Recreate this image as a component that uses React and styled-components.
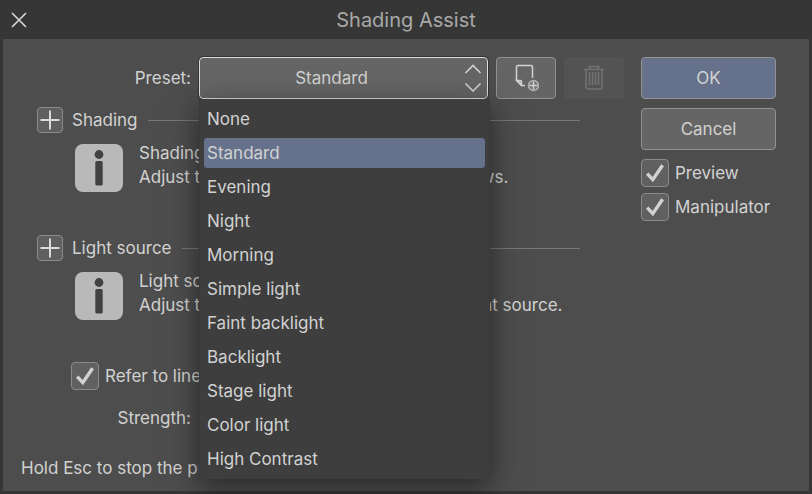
import React, { useState } from "react";
import styled, { createGlobalStyle } from "styled-components";

const GlobalStyle = createGlobalStyle`
  *, *::before, *::after { box-sizing: border-box; }
  body { margin: 0; background: #363636; }
  button, select, input { font: inherit; color: inherit; margin: 0; }
`;

const Dialog = styled.div`
  min-height: 100vh;
  display: flex;
  flex-direction: column;
  padding: 0 3px 3px;
  background: #363636;
  color: #d2d2d2;
  font-family: Inter, "Liberation Sans", sans-serif;
  font-size: 17px;
  line-height: 24px;
`;

const TitleBar = styled.header`
  display: grid;
  grid-template-columns: 32px 1fr 32px;
  align-items: center;
  height: 39px;
`;

const CloseButton = styled.button`
  display: flex;
  align-items: center;
  justify-content: center;
  width: 32px;
  height: 32px;
  padding: 0;
  border: 0;
  background: none;
`;

const Title = styled.h1`
  margin: 0;
  text-align: center;
  font-size: 20px;
  font-weight: 400;
  color: #a8a8a8;
`;

const Body = styled.main`
  flex: 1;
  display: grid;
  grid-template-columns: 1fr 135px;
  grid-template-rows: auto 1fr;
  column-gap: 17px;
  padding: 18px 33px 10px 18px;
  background: #4d4d4d;
`;

const Settings = styled.div`
  padding-left: 16px;
`;

const PresetRow = styled.div`
  display: flex;
  align-items: center;
  gap: 8px;
`;

const FieldLabel = styled.label`
  width: 154px;
  text-align: right;
`;

const SelectBox = styled.div`
  position: relative;
  flex: 1;
  height: 42px;
`;

const PresetSelect = styled.select`
  appearance: none;
  width: 100%;
  height: 42px;
  padding: 0 24px 0 0;
  border: 1px solid #dcdcdc;
  border-radius: 4px;
  outline: 1px solid #333;
  background: #656565;
  text-align: center;
  text-align-last: center;
`;

const Arrows = styled.svg`
  position: absolute;
  right: 6px;
  top: 7px;
  pointer-events: none;
`;

const Menu = styled.ul`
  position: absolute;
  z-index: 2;
  top: 100%;
  left: 0;
  right: -2px;
  margin: 0;
  padding: 3px 4px;
  list-style: none;
  background: #3e3e3e;
  border: 1px solid #393939;
  border-width: 0 1px;
  box-shadow: 0 8px 28px rgba(0, 0, 0, 0.5);
`;

const Option = styled.li`
  height: 30px;
  margin: 4px 0;
  padding: 0 3px;
  border-radius: 3px;
  line-height: 30px;
  background: ${(p) => (p.$selected ? "#66718c" : "transparent")};

  &:first-child { margin-top: 2px; }
  &:last-child { margin-bottom: 2px; }
`;

const Button = styled.button`
  display: flex;
  align-items: center;
  justify-content: center;
  width: ${(p) => p.$width || "100%"};
  height: 42px;
  padding: 0;
  border: 1px solid ${(p) => (p.disabled ? "transparent" : "#929292")};
  border-radius: 4px;
  color: ${(p) => (p.disabled ? "#727272" : "#d2d2d2")};
  background: ${(p) =>
    p.disabled ? "#535353" : p.$primary ? "#66718c" : "#656565"};
`;

const Section = styled.section`
  margin: ${(p) => (p.$first ? "8px" : "43px")} 44px 0 0;
`;

const SectionHeader = styled.div`
  display: flex;
  align-items: center;
  gap: 9px;
`;

const SectionTitle = styled.h2`
  margin: 0 1px 0 0;
  font-size: 17px;
  font-weight: 400;
`;

const Rule = styled.hr`
  flex: 1;
  height: 1px;
  margin: 0;
  border: 0;
  background: #777;
`;

const ExpandButton = styled.button`
  display: flex;
  align-items: center;
  justify-content: center;
  width: 26px;
  height: 26px;
  padding: 0;
  border: 1px solid #8b8b8b;
  border-radius: 4px;
  background: #5f5f5f;
`;

const Info = styled.div`
  display: flex;
  gap: 16px;
  padding: 8px 0 0 38px;
  white-space: nowrap;
`;

const InfoIcon = styled.svg`
  flex: none;
  margin-top: 3px;
`;

const InfoText = styled.p`
  margin: 0;
`;

const CheckLabel = styled.label`
  display: flex;
  align-items: center;
  gap: 6px;
`;

const CheckBox = styled.span`
  display: grid;
  width: 28px;
  height: 28px;

  & > * { grid-area: 1 / 1; }
  & > svg { pointer-events: none; }
  & > input:not(:checked) + svg { visibility: hidden; }
`;

const CheckInput = styled.input`
  appearance: none;
  width: 28px;
  height: 28px;
  border: 1px solid #8b8b8b;
  border-radius: 4px;
  background: #606060;
`;

const ReferRow = styled.div`
  display: flex;
  padding: 42px 0 0 34px;
  white-space: nowrap;
`;

const StrengthRow = styled.div`
  display: flex;
  align-items: center;
  gap: 8px;
  padding-top: 16px;
`;

const Slider = styled.input`
  width: 180px;
  height: 4px;
`;

const Actions = styled.aside`
  display: flex;
  flex-direction: column;
  gap: 9px;
`;

const ChecksGroup = styled.div`
  display: flex;
  flex-direction: column;
  gap: 6px;
`;

const Hint = styled.p`
  grid-column: 1 / -1;
  margin: 0;
  padding-top: 26px;
`;

const presets = [
  "None", "Standard", "Evening", "Night", "Morning", "Simple light",
  "Faint backlight", "Backlight", "Stage light", "Color light", "High Contrast",
];

function Check({ label }) {
  return (
    <CheckLabel>
      <CheckBox>
        <CheckInput type="checkbox" defaultChecked />
        <svg width="28" height="28" viewBox="0 0 28 28" fill="none" stroke="#d2d2d2" strokeWidth="3.4">
          <path d="M6.2 14.6 11.8 20.6 21.6 6.2" />
        </svg>
      </CheckBox>
      {label}
    </CheckLabel>
  );
}

function InfoSection({ title, lines, first }) {
  return (
    <Section $first={first}>
      <SectionHeader>
        <ExpandButton aria-label={`Expand ${title}`}>
          <svg width="20" height="20" viewBox="0 0 20 20" stroke="#dadada" strokeWidth="2">
            <path d="M10 0.5v19M0.5 10h19" />
          </svg>
        </ExpandButton>
        <SectionTitle>{title}</SectionTitle>
        <Rule />
      </SectionHeader>
      <Info>
        <InfoIcon width="48" height="48" viewBox="0 0 48 48">
          <rect width="48" height="48" rx="8" fill="#b9b9b9" />
          <circle cx="24" cy="10.5" r="4.4" fill="#414141" />
          <rect x="20.3" y="17" width="7.4" height="24.5" rx="1.5" fill="#414141" />
        </InfoIcon>
        <InfoText>
          {lines[0]}
          <br />
          {lines[1]}
        </InfoText>
      </Info>
    </Section>
  );
}

export default function App() {
  const [preset, setPreset] = useState("Standard");
  return (
    <Dialog role="dialog" aria-labelledby="dialog-title">
      <GlobalStyle />
      <TitleBar>
        <CloseButton aria-label="Close">
          <svg width="16" height="16" viewBox="0 0 16 16" stroke="#d8d8d8" strokeWidth="1.6">
            <path d="M1 1l14 14M15 1L1 15" />
          </svg>
        </CloseButton>
        <Title id="dialog-title">Shading Assist</Title>
      </TitleBar>
      <Body>
        <Settings>
          <PresetRow>
            <FieldLabel htmlFor="preset">Preset:</FieldLabel>
            <SelectBox>
              <PresetSelect id="preset" value={preset} onChange={(e) => setPreset(e.target.value)}>
                {presets.map((name) => <option key={name}>{name}</option>)}
              </PresetSelect>
              <Arrows width="18" height="28" viewBox="0 0 18 28" fill="none" stroke="#d2d2d2" strokeWidth="1.6">
                <path d="M1.5 9 9 1.5 16.5 9M1.5 19.5 9 27 16.5 19.5" />
              </Arrows>
              <Menu role="listbox" aria-label="Presets">
                {presets.map((name) => (
                  <Option
                    key={name}
                    role="option"
                    aria-selected={name === preset}
                    $selected={name === preset}
                    onClick={() => setPreset(name)}
                  >
                    {name}
                  </Option>
                ))}
              </Menu>
            </SelectBox>
            <Button $width="60px" aria-label="Save preset">
              <svg width="26" height="28" viewBox="0 0 26 28" fill="none" stroke="#d2d2d2" strokeWidth="1.5">
                <path d="M19.500 14V3A1.500 1.500 0 0 0 18 1.500H5A1.500 1.500 0 0 0 3.500 3V16.500L8.500 21.500H12" />
                <path d="M4 16.500H7.500A1 1 0 0 1 8.500 17.500V21Z" fill="#a8a8a8" />
                <circle cx="20.500" cy="21.500" r="5" fill="#757575" stroke="#b4b4b4" />
                <path d="M20.500 17.500v8M16.500 21.500h8" />
              </svg>
            </Button>
            <Button $width="60px" disabled aria-label="Delete preset">
              <svg width="22" height="26" viewBox="0 0 22 26" fill="none" stroke="currentColor" strokeWidth="1.6">
                <path d="M1 4.500h20M6.500 4V1.500h9V4M3 5v16.500A2.500 2.500 0 0 0 5.500 24h11a2.500 2.500 0 0 0 2.500-2.500V5M6.500 7v13M9.500 7v13M12.500 7v13M15.500 7v13" />
              </svg>
            </Button>
          </PresetRow>
          <InfoSection
            first
            title="Shading"
            lines={["Shading settings", "Adjust the color and direction of the shadows."]}
          />
          <InfoSection
            title="Light source"
            lines={["Light source settings", "Adjust the direction and elevation of the light source."]}
          />
          <ReferRow>
            <Check label="Refer to line art" />
          </ReferRow>
          <StrengthRow>
            <FieldLabel htmlFor="strength">Strength:</FieldLabel>
            <Slider id="strength" type="range" />
          </StrengthRow>
        </Settings>
        <Actions>
          <Button $primary>OK</Button>
          <Button>Cancel</Button>
          <ChecksGroup>
            <Check label="Preview" />
            <Check label="Manipulator" />
          </ChecksGroup>
        </Actions>
        <Hint>Hold Esc to stop the preview.</Hint>
      </Body>
    </Dialog>
  );
}
